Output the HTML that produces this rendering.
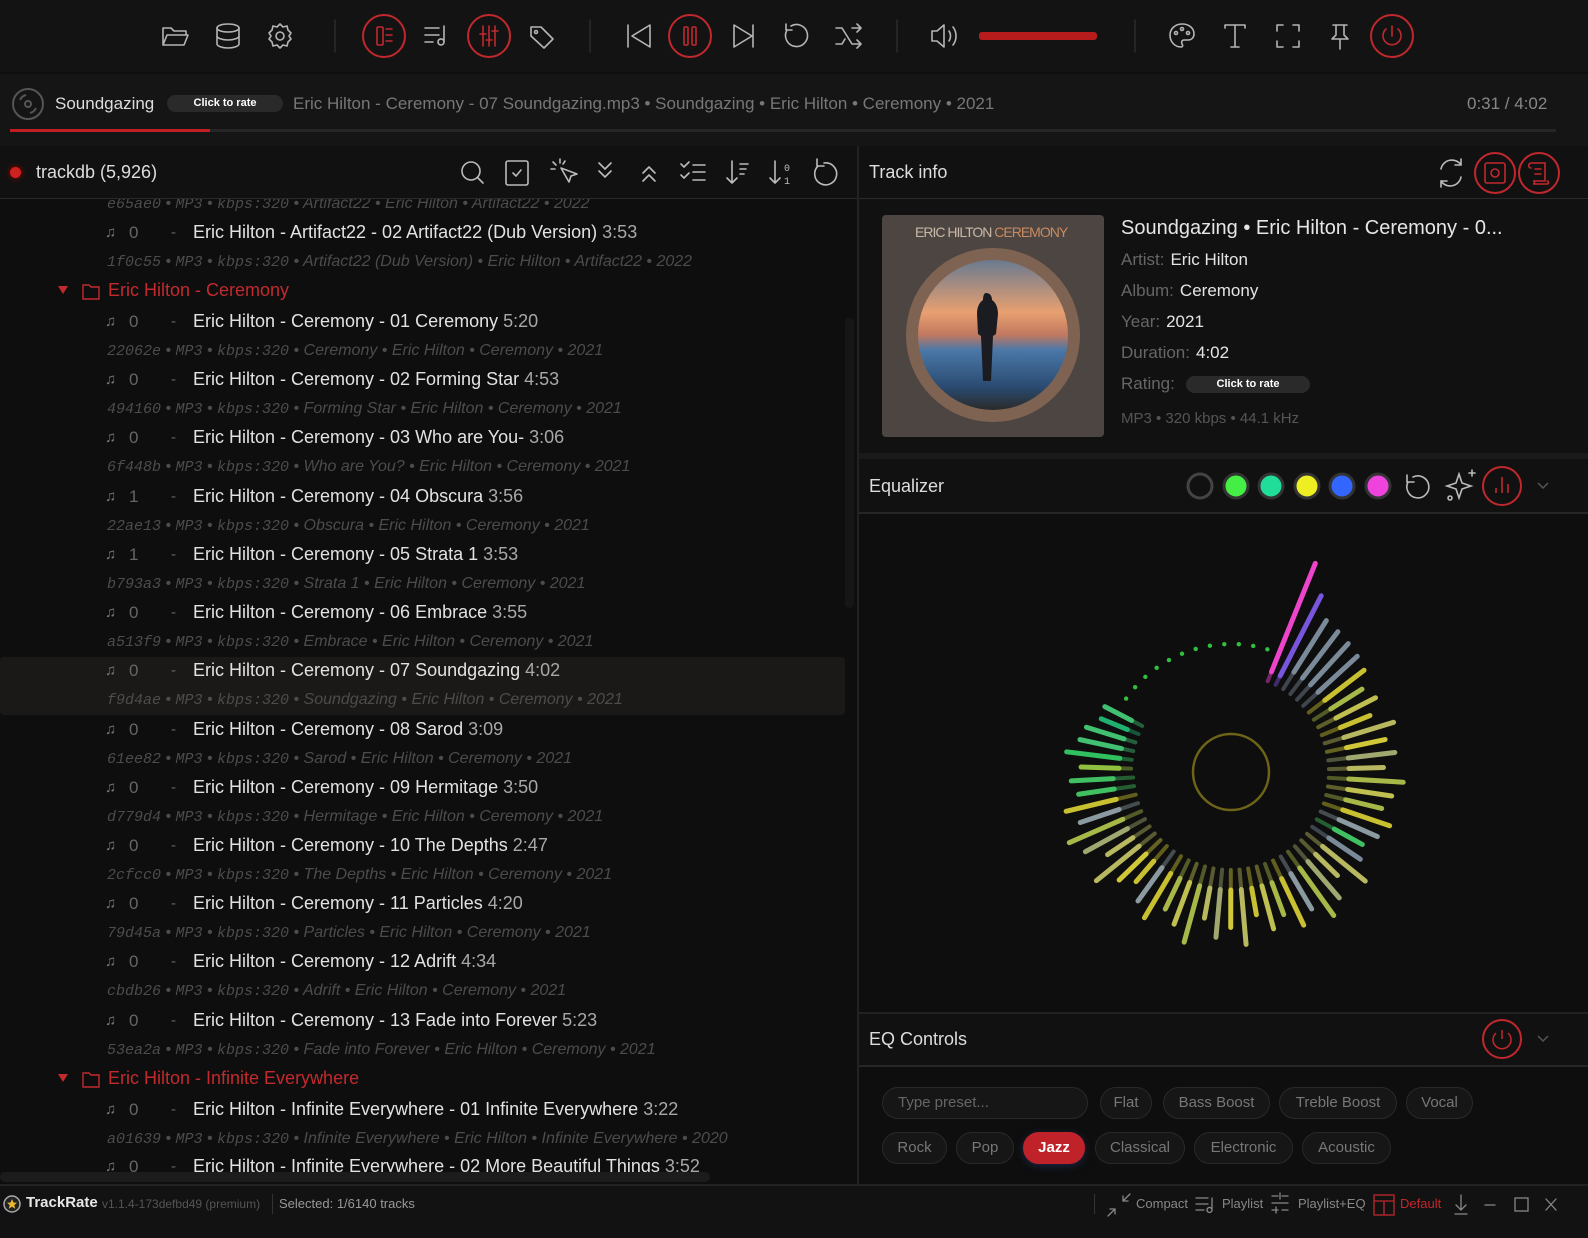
<!DOCTYPE html>
<html><head><meta charset="utf-8">
<style>
*{box-sizing:border-box;margin:0;padding:0}
body{width:1588px;height:1238px;background:#0e0e0e;font-family:"Liberation Sans",sans-serif;position:relative;overflow:hidden;color:#ddd}
.a{position:absolute}
.rc{position:absolute;width:44px;height:44px;border:2px solid #c0282d;border-radius:50%}
.row{position:absolute;left:0;height:29px;line-height:29px;white-space:nowrap;font-size:18px}
.t .n{position:absolute;left:105px;color:#777;font-size:15px}
.t .z{position:absolute;left:129px;color:#666;font-size:17px}
.t .d{position:absolute;left:171px;color:#666;font-size:15px}
.t .ti{position:absolute;left:193px;color:#e2e2e2}
.t .ti span{color:#a8a8a8}
.m{font-size:16px;font-style:italic;color:#4c4c4c;padding-left:107px}
.m code{font-family:"Liberation Mono",monospace;font-size:15px}
.f{color:#c22a2e;font-size:18px}
.pill{position:absolute;height:32px;line-height:30px;border:1px solid #292929;background:#161616;border-radius:16px;color:#777;font-size:15px;text-align:center}
.lbl{position:absolute;left:1121px;font-size:17px;color:#666}
.lbl b{font-weight:normal;color:#e4e4e4;margin-left:6px}
.sb{position:absolute;top:1196px;font-size:13px;color:#999}
</style></head><body>
<div class="a" style="left:0;top:0;width:1588px;height:72px;background:#131313"></div>
<svg class="a" style="left:0;top:0" width="1588" height="72" fill="none" stroke="#b5b5b5" stroke-width="1.6" stroke-linecap="round" stroke-linejoin="round">
<path d="M163 45V28h8l3 3h12v4M163 45l4-10h21l-4 10z"/>
<ellipse cx="228" cy="28" rx="11" ry="4"/><path d="M217 28v16c0 2 5 4 11 4s11-2 11-4V28M217 36c0 2 5 4 11 4s11-2 11-4"/>
<circle cx="280" cy="36" r="4"/><path d="M280 24l3 3 4-1 1 4 3 3-2 3 2 3-3 3-1 4-4-1-3 3-3-3-4 1-1-4-3-3 2-3-2-3 3-3 1-4 4 1z"/>
<line x1="335" y1="20" x2="335" y2="52" stroke="#2a2a2a"/>
<g stroke="#c0282d"><rect x="377" y="27" width="6" height="18" rx="1"/><path d="M386 29h6M386 35h6M386 41h6"/></g>
<path d="M425 28h14M425 35h14M425 42h8M444 42a3 3 0 1 1 0-.1V26"/>
<g stroke="#c0282d"><path d="M483 26v20M489 26v20M495 26v20M480 34h6M486 40h6M492 31h6"/></g>
<path d="M531 27h10l12 12-9 9-13-12z"/><circle cx="536" cy="32" r="1.5"/>
<line x1="590" y1="20" x2="590" y2="52" stroke="#2a2a2a"/>
<path d="M628 25v22M650 25l-18 11 18 11z"/>
<g stroke="#c0282d"><rect x="684" y="27" width="4" height="18" rx="1"/><rect x="692" y="27" width="4" height="18" rx="1"/></g>
<path d="M734 25l18 11-18 11zM753 25v22"/>
<path d="M787 30a11 11 0 1 0 4-4M786 24v6h6"/>
<path d="M836 28h6l10 16h8M836 44h6l3-5M852 28h8M857 24l4 4-4 4M857 40l4 4-4 4"/>
<line x1="897" y1="20" x2="897" y2="52" stroke="#2a2a2a"/>
<path d="M932 31h5l7-6v22l-7-6h-5zM949 31c2 3 2 7 0 10M953 27c4 5 4 13 0 18"/>
<line x1="1135" y1="20" x2="1135" y2="52" stroke="#2a2a2a"/>
<path d="M1182 24c-7 0-12 5-12 11 0 7 5 12 11 12 2 0 2-2 1-3-1-2 0-4 2-4h4c4 0 6-3 6-6 0-6-5-10-12-10z"/><circle cx="1176" cy="33" r="1.5"/><circle cx="1182" cy="29" r="1.5"/><circle cx="1188" cy="33" r="1.5"/>
<path d="M1225 28v-3h20v3M1235 25v22M1231 47h8"/>
<path d="M1277 31v-6h6M1293 25h6v6M1299 41v6h-6M1283 47h-6v-6"/>
<path d="M1333 25h14M1336 25v10l-4 4h16l-4-4V25M1340 39v10"/>
<g stroke="#c0282d"><path d="M1392 26v10M1386 29a9 9 0 1 0 12 0"/></g>
</svg>
<div class="rc" style="left:362px;top:14px"></div>
<div class="rc" style="left:467px;top:14px"></div>
<div class="rc" style="left:668px;top:14px"></div>
<div class="rc" style="left:1370px;top:14px"></div>
<div class="a" style="left:979px;top:32px;width:118px;height:8px;background:#b71c1c;border-radius:3px"></div>

<div class="a" style="left:0;top:74px;width:1588px;height:72px;background:#151515"></div>
<svg class="a" style="left:10px;top:86px" width="36" height="36" fill="none" stroke="#555" stroke-width="2"><circle cx="18" cy="18" r="15"/><circle cx="18" cy="18" r="3"/><path d="M10 14a9 9 0 0 1 6-5M26 22a9 9 0 0 1-6 5"/></svg>
<div class="a" style="left:55px;top:94px;font-size:17px;color:#ddd">Soundgazing</div>
<div class="a" style="left:167px;top:95px;width:116px;height:17px;border-radius:9px;background:#2a2a2a;color:#fff;font-size:11px;font-weight:bold;text-align:center;line-height:17px">Click to rate</div>
<div class="a" style="left:293px;top:94px;font-size:17px;color:#777">Eric Hilton - Ceremony - 07 Soundgazing.mp3 • Soundgazing • Eric Hilton • Ceremony • 2021</div>
<div class="a" style="left:1467px;top:94px;font-size:17px;color:#888">0:31 / 4:02</div>
<div class="a" style="left:10px;top:129px;width:1546px;height:3px;background:#262626"></div>
<div class="a" style="left:10px;top:129px;width:200px;height:3px;background:#c01e22"></div>

<div class="a" style="left:0;top:146px;width:857px;height:52px;background:#111"></div>
<div class="a" style="left:0;top:198px;width:857px;height:1px;background:#2a2a2a"></div>
<div class="a" style="left:10px;top:167px;width:11px;height:11px;border-radius:50%;background:#d02020;box-shadow:0 0 6px #a00"></div>
<div class="a" style="left:36px;top:162px;font-size:18px;color:#ddd">trackdb (5,926)</div>
<svg class="a" style="left:450px;top:155px" width="400" height="36" fill="none" stroke="#bbb" stroke-width="1.6" stroke-linecap="round" stroke-linejoin="round">
<circle cx="21" cy="16" r="9"/><path d="M28 23l5 5"/>
<rect x="56" y="6" width="22" height="24" rx="2"/><path d="M63 18l3 3 5-6"/>
<path d="M111 13l16 6-6 2-2 6zM103 7l3 3M110 4v4M101 14h4M115 6l-2 3"/>
<path d="M149 8l6 6 6-6M149 16l6 6 6-6"/>
<path d="M193 18l6-6 6 6M193 26l6-6 6 6"/>
<path d="M231 9l3 3 5-5M231 20l3 3 5-5M243 10h12M243 17h12M243 25h12"/>
<path d="M282 6v22M277 23l5 5 5-5M290 9h8M290 14h6M290 19h4"/>
<path d="M325 6v22M320 23l5 5 5-5"/><text x="334" y="16" font-size="10" fill="#bbb" stroke="none" font-family="Liberation Mono">0</text><text x="334" y="29" font-size="10" fill="#bbb" stroke="none" font-family="Liberation Mono">1</text>
<path d="M368 11a11 11 0 1 0 6-3M367 4v7h7"/>
</svg>
<div class="a" style="left:857px;top:146px;width:2px;height:1040px;background:#222"></div>

<div class="a" style="left:0;top:657px;width:845px;height:58px;background:#1b1918;border-radius:4px"></div>
<div id="list" style="position:absolute;left:0;top:199px;width:845px;height:975px;overflow:hidden"></div>
<div class="a" style="left:845px;top:318px;width:9px;height:290px;background:#161616;border-radius:4px"></div>
<div class="a" style="left:0;top:1172px;width:710px;height:10px;background:#1c1c1c;border-radius:5px"></div>
<div class="a" style="left:0;top:1184px;width:1588px;height:2px;background:#222"></div>

<div class="a" style="left:859px;top:146px;width:729px;height:52px;background:#111"></div>
<div class="a" style="left:859px;top:198px;width:729px;height:1px;background:#2a2a2a"></div>
<div class="a" style="left:869px;top:162px;font-size:18px;color:#ddd">Track info</div>
<svg class="a" style="left:1430px;top:150px" width="150" height="46" fill="none" stroke="#bbb" stroke-width="1.6" stroke-linecap="round">
<path d="M11 19a11 11 0 0 1 20-4M31 27a11 11 0 0 1-20 4M31 9v6h-6M11 37v-6h6"/>
<circle cx="65" cy="23" r="20" stroke="#c0282d" stroke-width="2"/><rect x="55" y="13" width="20" height="20" rx="2" stroke="#c0282d"/><circle cx="65" cy="23" r="4" stroke="#c0282d"/>
<circle cx="109" cy="23" r="20" stroke="#c0282d" stroke-width="2"/><path d="M101 13h14v18M101 13c-3 0-3 5 0 5M115 31h-12c2 0 2 3 0 3h14c2 0 2-3 0-3M105 19h6M105 24h6" stroke="#c0282d"/>
</svg>
<div class="a" style="left:859px;top:199px;width:729px;height:254px;background:#111"></div>
<svg class="a" style="left:882px;top:215px" width="222" height="222">
<defs><linearGradient id="sky" x1="0" y1="0" x2="0" y2="1"><stop offset="0" stop-color="#6a7a90"/><stop offset=".35" stop-color="#e8a070"/><stop offset=".5" stop-color="#c07860"/><stop offset=".6" stop-color="#4a78a8"/><stop offset=".85" stop-color="#2a4a70"/><stop offset="1" stop-color="#2a2a28"/></linearGradient></defs>
<rect width="222" height="222" rx="4" fill="#4d4542"/>
<circle cx="111" cy="120" r="87" fill="#7f6352"/>
<ellipse cx="111" cy="120" rx="75" ry="75" fill="url(#sky)"/>
<path d="M104 78c4 0 6 3 6 7 3 2 6 6 6 14l-2 20-3 2-2 45h-8l-2-45-3-2-1-20c0-8 3-12 6-14 0-4 1-7 3-7z" fill="#1a1c22"/>
<text x="33" y="22" font-size="14" fill="#c9b8a8" font-family="Liberation Sans" letter-spacing="-1">ERIC HILTON <tspan fill="#c88a60">CEREMONY</tspan></text>
</svg>
<div class="a" style="left:1121px;top:217px;font-size:20px;color:#e6e6e6">Soundgazing • Eric Hilton - Ceremony - 0...</div>
<div class="lbl" style="top:250px">Artist:<b>Eric Hilton</b></div>
<div class="lbl" style="top:281px">Album:<b>Ceremony</b></div>
<div class="lbl" style="top:312px">Year:<b>2021</b></div>
<div class="lbl" style="top:343px">Duration:<b>4:02</b></div>
<div class="lbl" style="top:374px">Rating:</div>
<div class="a" style="left:1186px;top:376px;width:124px;height:17px;border-radius:9px;background:#2a2a2a;color:#fff;font-size:11px;font-weight:bold;text-align:center;line-height:17px">Click to rate</div>
<div class="lbl" style="top:410px;font-size:15px;color:#555">MP3 • 320 kbps • 44.1 kHz</div>
<div class="a" style="left:859px;top:453px;width:729px;height:6px;background:#1a1a1a"></div>
<div class="a" style="left:859px;top:459px;width:729px;height:53px;background:#111"></div>
<div class="a" style="left:859px;top:512px;width:729px;height:2px;background:#262626"></div>
<div class="a" style="left:869px;top:476px;font-size:18px;color:#ddd">Equalizer</div>
<svg class="a" style="left:1180px;top:462px" width="400" height="48" fill="none">
<circle cx="20" cy="24" r="12" stroke="#444" stroke-width="3"/>
<circle cx="56" cy="24" r="12" fill="#44ee44" stroke="#333" stroke-width="3"/>
<circle cx="91" cy="24" r="12" fill="#20dd99" stroke="#333" stroke-width="3"/>
<circle cx="127" cy="24" r="12" fill="#eeee22" stroke="#333" stroke-width="3"/>
<circle cx="162" cy="24" r="12" fill="#3366ff" stroke="#333" stroke-width="3"/>
<circle cx="198" cy="24" r="12" fill="#ee44dd" stroke="#333" stroke-width="3"/>
<g stroke="#bbb" stroke-width="1.6" stroke-linecap="round"><path d="M228 20a11 11 0 1 0 5-5M227 13v7h7"/>
<path d="M279 12l3 9 9 3-9 3-3 9-3-9-9-3 9-3zM292 8v6M289 11h6"/><circle cx="270" cy="36" r="2"/></g>
<circle cx="322" cy="24" r="19" stroke="#c0282d" stroke-width="2"/><path d="M316 31v-5M322 31V15M328 31v-9" stroke="#c0282d" stroke-width="1.6"/>
<path d="M358 21l5 5 5-5" stroke="#555" stroke-width="1.5"/>
</svg>
<svg id="viz" class="a" style="left:859px;top:515px" width="729" height="497"></svg>
<div class="a" style="left:859px;top:1012px;width:729px;height:2px;background:#222"></div>
<div class="a" style="left:859px;top:1014px;width:729px;height:51px;background:#111"></div>
<div class="a" style="left:859px;top:1065px;width:729px;height:2px;background:#262626"></div>
<div class="a" style="left:869px;top:1029px;font-size:18px;color:#ddd">EQ Controls</div>
<svg class="a" style="left:1480px;top:1017px" width="80" height="46" fill="none"><circle cx="22" cy="22" r="19" stroke="#c0282d" stroke-width="2"/><path d="M22 13v9M16 16a9 9 0 1 0 12 0" stroke="#c0282d" stroke-width="1.5"/><path d="M58 19l5 5 5-5" stroke="#555" stroke-width="1.5"/></svg>
<div class="pill" style="left:882px;top:1087px;width:206px;text-align:left;padding-left:15px;color:#666">Type preset...</div>
<div class="pill" style="left:1100px;top:1087px;width:52px">Flat</div>
<div class="pill" style="left:1163px;top:1087px;width:107px">Bass Boost</div>
<div class="pill" style="left:1279px;top:1087px;width:118px">Treble Boost</div>
<div class="pill" style="left:1406px;top:1087px;width:67px">Vocal</div>
<div class="pill" style="left:882px;top:1132px;width:65px">Rock</div>
<div class="pill" style="left:956px;top:1132px;width:58px">Pop</div>
<div class="pill" style="left:1023px;top:1132px;width:62px;background:#c0222a;border-color:#c0222a;color:#fff;font-weight:bold;box-shadow:0 2px 8px rgba(40,60,120,.5)">Jazz</div>
<div class="pill" style="left:1095px;top:1132px;width:90px">Classical</div>
<div class="pill" style="left:1194px;top:1132px;width:99px">Electronic</div>
<div class="pill" style="left:1302px;top:1132px;width:89px">Acoustic</div>

<div class="a" style="left:0;top:1186px;width:1588px;height:52px;background:#121212"></div>
<svg class="a" style="left:2px;top:1194px" width="20" height="20"><circle cx="10" cy="10" r="8" fill="#222" stroke="#aaa" stroke-width="1.5"/><path d="M10 5l1.5 3.5 3.5.3-2.7 2.3.9 3.6L10 12.8l-3.2 1.9.9-3.6L5 8.8l3.5-.3z" fill="#e8b830"/></svg>
<div class="sb" style="left:26px;top:1194px;font-size:15px;font-weight:bold;color:#e8e8e8">TrackRate</div>
<div class="sb" style="left:102px;top:1197px;font-size:12px;color:#555">v1.1.4-173defbd49 (premium)</div>
<div class="a" style="left:272px;top:1194px;width:1px;height:20px;background:#333"></div>
<div class="sb" style="left:279px">Selected: 1/6140 tracks</div>
<div class="a" style="left:1094px;top:1194px;width:1px;height:20px;background:#333"></div>
<svg class="a" style="left:1100px;top:1190px" width="488" height="30" fill="none" stroke="#888" stroke-width="1.3" stroke-linecap="round">
<path d="M30 4l-7 7M23 6v5h5M8 26l7-7M15 24v-5h-5"/>
<path d="M96 8h12M96 14h12M96 20h8M112 20a2.5 2.5 0 1 1 0-.1V8"/>
<path d="M172 6h6M182 6h6M172 13h16M172 20h6M182 20h6M180 3v6M176 17v6"/>
<rect x="274" y="5" width="20" height="20" stroke="#c0282d"/><path d="M274 11h20M284 11v14" stroke="#c0282d"/>
<path d="M361 5v14M356 15l5 5 5-5M355 24h12"/>
<path d="M385 15h10"/>
<rect x="415" y="8" width="13" height="13"/>
<path d="M446 9l10 11M456 9l-10 11"/>
</svg>
<div class="sb" style="left:1136px;color:#888">Compact</div>
<div class="sb" style="left:1222px;color:#888">Playlist</div>
<div class="sb" style="left:1298px;color:#888">Playlist+EQ</div>
<div class="sb" style="left:1400px;color:#c0282d">Default</div>

<script>
(function(){
var rows=[
["m",204,"e65ae0","Artifact22 • Eric Hilton • Artifact22 • 2022"],
["t",233,"0","Eric Hilton - Artifact22 - 02 Artifact22 (Dub Version)","3:53"],
["m",262,"1f0c55","Artifact22 (Dub Version) • Eric Hilton • Artifact22 • 2022"],
["f",291,"Eric Hilton - Ceremony"],
["t",322,"0","Eric Hilton - Ceremony - 01 Ceremony","5:20"],
["m",351,"22062e","Ceremony • Eric Hilton • Ceremony • 2021"],
["t",380,"0","Eric Hilton - Ceremony - 02 Forming Star","4:53"],
["m",409,"494160","Forming Star • Eric Hilton • Ceremony • 2021"],
["t",438,"0","Eric Hilton - Ceremony - 03 Who are You-","3:06"],
["m",467,"6f448b","Who are You? • Eric Hilton • Ceremony • 2021"],
["t",497,"1","Eric Hilton - Ceremony - 04 Obscura","3:56"],
["m",526,"22ae13","Obscura • Eric Hilton • Ceremony • 2021"],
["t",555,"1","Eric Hilton - Ceremony - 05 Strata 1","3:53"],
["m",584,"b793a3","Strata 1 • Eric Hilton • Ceremony • 2021"],
["t",613,"0","Eric Hilton - Ceremony - 06 Embrace","3:55"],
["m",642,"a513f9","Embrace • Eric Hilton • Ceremony • 2021"],
["t",671,"0","Eric Hilton - Ceremony - 07 Soundgazing","4:02"],
["m",700,"f9d4ae","Soundgazing • Eric Hilton • Ceremony • 2021"],
["t",730,"0","Eric Hilton - Ceremony - 08 Sarod","3:09"],
["m",759,"61ee82","Sarod • Eric Hilton • Ceremony • 2021"],
["t",788,"0","Eric Hilton - Ceremony - 09 Hermitage","3:50"],
["m",817,"d779d4","Hermitage • Eric Hilton • Ceremony • 2021"],
["t",846,"0","Eric Hilton - Ceremony - 10 The Depths","2:47"],
["m",875,"2cfcc0","The Depths • Eric Hilton • Ceremony • 2021"],
["t",904,"0","Eric Hilton - Ceremony - 11 Particles","4:20"],
["m",933,"79d45a","Particles • Eric Hilton • Ceremony • 2021"],
["t",962,"0","Eric Hilton - Ceremony - 12 Adrift","4:34"],
["m",991,"cbdb26","Adrift • Eric Hilton • Ceremony • 2021"],
["t",1021,"0","Eric Hilton - Ceremony - 13 Fade into Forever","5:23"],
["m",1050,"53ea2a","Fade into Forever • Eric Hilton • Ceremony • 2021"],
["f",1079,"Eric Hilton - Infinite Everywhere"],
["t",1110,"0","Eric Hilton - Infinite Everywhere - 01 Infinite Everywhere","3:22"],
["m",1139,"a01639","Infinite Everywhere • Eric Hilton • Infinite Everywhere • 2020"],
["t",1167,"0","Eric Hilton - Infinite Everywhere - 02 More Beautiful Things","3:52"]];
var h="";
rows.forEach(function(r){
var top=r[1]-15-199;
if(r[0]=="t")h+='<div class="row t" style="top:'+top+'px"><span class="n">&#9835;</span><span class="z">'+r[2]+'</span><span class="d">-</span><span class="ti">'+r[3]+' <span>'+r[4]+'</span></span></div>';
else if(r[0]=="m")h+='<div class="row m" style="top:'+top+'px"><code>'+r[2]+'</code> • <code>MP3</code> • <code>kbps:320</code> • '+r[3]+'</div>';
else h+='<div class="row f" style="top:'+top+'px;width:845px"><svg style="position:absolute;left:57px;top:6px" width="48" height="18"><path d="M1 4h10L6 12z" fill="#c22a2e"/><path d="M26 3h6l2 2h8v12H26z" fill="none" stroke="#c22a2e" stroke-width="1.4"/></svg><span style="position:absolute;left:108px">'+r[2]+'</span></div>';
});
document.getElementById('list').innerHTML=h;
var cx=372,cy=257,s='<circle cx="'+cx+'" cy="'+cy+'" r="38" fill="none" stroke="#6e6418" stroke-width="2.5"/>';
var cols=["#c8c030","#b8b860","#a8b848","#d0c838","#8a9aa0","#c0c050","#a0a870"];
var rnd=[3,8,1,6,9,4,7,2,5,0,8,3,6,1,9,5,2,7,4,0];
var i=0;
for(var th=22;th<=300;th+=5.1){
 var a=(th-90)*Math.PI/180,c,ro;
 var n=rnd[i%20];
 ro=135+n*4.5;
 if(th<25){c="#ee44cc";ro=225;}
 else if(th<30){c="#7755dd";ro=198;}
 else if(th<48){c="#7a8a99";ro=180-(th-30)*0.5;}
 else if(th<115){c=cols[n%7];ro=150+n*2.5;}
 else if(th<125){c=n%2?"#7a8a99":"#40c060";ro=150+n*2;}
 else if(th<260){c=cols[n%7];ro=145+n*3.5;}
 else if(th<275){c=["#90c040","#a8c048","#40c060"][n%3];ro=150+n*2;}
 else {c=["#40c070","#20b070","#30c060"][n%3];ro=160-(th-275)*1.2+n;}
 var r0=98,r1=th<30?108:118;
 if(th>270){r0=100;r1=112;}
 var co=Math.cos(a),si=Math.sin(a);
 s+='<line x1="'+(cx+r0*co)+'" y1="'+(cy+r0*si)+'" x2="'+(cx+r1*co)+'" y2="'+(cy+r1*si)+'" stroke="'+c+'" stroke-opacity=".45" stroke-width="4" stroke-linecap="round"/>';
 s+='<line x1="'+(cx+r1*co)+'" y1="'+(cy+r1*si)+'" x2="'+(cx+ro*co)+'" y2="'+(cy+ro*si)+'" stroke="'+c+'" stroke-width="5" stroke-linecap="round"/>';
 i++;
}
for(var th=305;th<=378;th+=6.5){var a=(th-90)*Math.PI/180;s+='<circle cx="'+(cx+128*Math.cos(a))+'" cy="'+(cy+128*Math.sin(a))+'" r="2.2" fill="#30c040"/>';}
document.getElementById('viz').innerHTML=s;
})();
</script>
</body></html>
